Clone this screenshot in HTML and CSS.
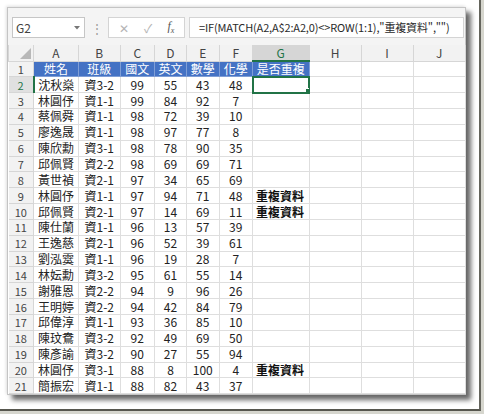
FILE: index.html
```html
<!DOCTYPE html>
<html lang="zh-Hant">
<head>
  <meta charset="UTF-8">
  <title>重複資料 - Excel</title>
  <link rel="stylesheet" href="styles.css">
</head>
<body>
  <div class="page">
    <div class="sheet">

      <!-- Name box + formula bar -->
      <div class="toolbar">
        <div class="name-box">
          <span>G2</span>
          <svg class="dd" width="6" height="4" viewBox="0 0 6 4"><polygon points="0,0 6,0 3,3.5" fill="#777"/></svg>
        </div>
        <div class="grip">⋮</div>
        <div class="fx-box">
          <span class="fx-btn">✕</span>
          <span class="fx-btn">✓</span>
          <span class="fx-btn fx">f<sub>x</sub></span>
        </div>
        <div class="formula">=IF(MATCH(A2,A$2:A2,0)&lt;&gt;ROW(1:1),"重複資料","")</div>
      </div>

      <!-- Grid -->
      <table class="grid">
        <colgroup>
          <col class="w-rh"><col class="w-a"><col class="w-b"><col class="w-c"><col class="w-d">
          <col class="w-e"><col class="w-f"><col class="w-g"><col class="w-h"><col class="w-i"><col class="w-j">
        </colgroup>
        <tr class="col-heads">
          <th class="corner"><svg width="11" height="11" viewBox="0 0 11 11"><polygon points="11,0 11,11 0,11" fill="#b8b8b8"/></svg></th>
          <th>A</th><th>B</th><th>C</th><th>D</th><th>E</th><th>F</th><th class="sel">G</th><th>H</th><th>I</th><th>J</th>
        </tr>
        <tr>
          <th class="rh">1</th>
          <td class="hd">姓名</td><td class="hd">班級</td><td class="hd">國文</td><td class="hd">英文</td><td class="hd">數學</td><td class="hd">化學</td><td class="hd">是否重複</td><td></td><td></td><td></td>
        </tr>
        <tr>
          <th class="rh sel">2</th>
          <td>沈秋燊</td><td>資3-2</td><td>99</td><td>55</td><td>43</td><td>48</td><td class="active"><span class="handle"></span></td><td></td><td></td><td></td>
        </tr>
        <tr><th class="rh">3</th><td>林圓伃</td><td>資1-1</td><td>99</td><td>84</td><td>92</td><td>7</td><td class="dup"></td><td></td><td></td><td></td></tr>
        <tr><th class="rh">4</th><td>蔡佩舜</td><td>資1-1</td><td>98</td><td>72</td><td>39</td><td>10</td><td class="dup"></td><td></td><td></td><td></td></tr>
        <tr><th class="rh">5</th><td>廖逸晟</td><td>資1-1</td><td>98</td><td>97</td><td>77</td><td>8</td><td class="dup"></td><td></td><td></td><td></td></tr>
        <tr><th class="rh">6</th><td>陳欣勳</td><td>資3-1</td><td>98</td><td>78</td><td>90</td><td>35</td><td class="dup"></td><td></td><td></td><td></td></tr>
        <tr><th class="rh">7</th><td>邱佩賢</td><td>資2-2</td><td>98</td><td>69</td><td>69</td><td>71</td><td class="dup"></td><td></td><td></td><td></td></tr>
        <tr><th class="rh">8</th><td>黃世禎</td><td>資2-1</td><td>97</td><td>34</td><td>65</td><td>69</td><td class="dup"></td><td></td><td></td><td></td></tr>
        <tr><th class="rh">9</th><td>林圓伃</td><td>資1-1</td><td>97</td><td>94</td><td>71</td><td>48</td><td class="dup">重複資料</td><td></td><td></td><td></td></tr>
        <tr><th class="rh">10</th><td>邱佩賢</td><td>資2-1</td><td>97</td><td>14</td><td>69</td><td>11</td><td class="dup">重複資料</td><td></td><td></td><td></td></tr>
        <tr><th class="rh">11</th><td>陳仕蘭</td><td>資1-1</td><td>96</td><td>13</td><td>57</td><td>39</td><td class="dup"></td><td></td><td></td><td></td></tr>
        <tr><th class="rh">12</th><td>王逸慈</td><td>資2-1</td><td>96</td><td>52</td><td>39</td><td>61</td><td class="dup"></td><td></td><td></td><td></td></tr>
        <tr><th class="rh">13</th><td>劉泓霙</td><td>資1-1</td><td>96</td><td>19</td><td>28</td><td>7</td><td class="dup"></td><td></td><td></td><td></td></tr>
        <tr><th class="rh">14</th><td>林妘勳</td><td>資3-2</td><td>95</td><td>61</td><td>55</td><td>14</td><td class="dup"></td><td></td><td></td><td></td></tr>
        <tr><th class="rh">15</th><td>謝雅恩</td><td>資2-2</td><td>94</td><td>9</td><td>96</td><td>26</td><td class="dup"></td><td></td><td></td><td></td></tr>
        <tr><th class="rh">16</th><td>王明婷</td><td>資2-2</td><td>94</td><td>42</td><td>84</td><td>79</td><td class="dup"></td><td></td><td></td><td></td></tr>
        <tr><th class="rh">17</th><td>邱偉淳</td><td>資1-1</td><td>93</td><td>36</td><td>85</td><td>10</td><td class="dup"></td><td></td><td></td><td></td></tr>
        <tr><th class="rh">18</th><td>陳玟鴦</td><td>資3-2</td><td>92</td><td>49</td><td>69</td><td>50</td><td class="dup"></td><td></td><td></td><td></td></tr>
        <tr><th class="rh">19</th><td>陳彥諭</td><td>資3-2</td><td>90</td><td>27</td><td>55</td><td>94</td><td class="dup"></td><td></td><td></td><td></td></tr>
        <tr><th class="rh">20</th><td>林圓伃</td><td>資3-1</td><td>88</td><td>8</td><td>100</td><td>4</td><td class="dup">重複資料</td><td></td><td></td><td></td></tr>
        <tr><th class="rh">21</th><td>簡振宏</td><td>資1-1</td><td>88</td><td>82</td><td>43</td><td>37</td><td class="dup"></td><td></td><td></td><td></td></tr>
      </table>

    </div>
  </div>
</body>
</html>
```

FILE: styles.css
```css
/* Page frame */
body {
  margin: 0;
  background: #d6d6ce;
  font-family: "Noto Sans CJK TC", sans-serif;
  color: #222;
}

.page {
  box-sizing: border-box;
  width: 481px;
  height: 411px;
  padding: 7px 0 0 7px;
  background: #fff;
  border-right: 2px solid #64645c;
  border-bottom: 2px solid #56564e;
}

.sheet {
  width: 457px;
  background: #f4f4f4;
  border: 1px solid #c4c4c4;
  box-shadow: 5px 5px 5px rgba(0, 0, 0, 0.6), -1px -1px 3px rgba(0, 0, 0, 0.12);
}

/* Formula bar */
.toolbar {
  display: flex;
  align-items: flex-start;
  height: 37px;
  padding: 9px 1px 0 4px;
  box-sizing: border-box;
}

.name-box {
  display: flex;
  align-items: center;
  justify-content: space-between;
  box-sizing: border-box;
  width: 73px;
  height: 21px;
  padding: 0 4px 0 3px;
  background: #fff;
  border: 1px solid #c6c6c6;
  font-size: 12px;
  color: #444;
}

.grip {
  width: 23px;
  text-align: center;
  line-height: 21px;
  font-size: 12px;
  color: #9a9a9a;
}

.fx-box {
  display: flex;
  align-items: center;
  justify-content: space-around;
  box-sizing: border-box;
  width: 77px;
  height: 21px;
  padding: 0 2px;
  background: #fff;
  border: 1px solid #d4d4d4;
}

.fx-btn {
  font-size: 12px;
  color: #b4b4b4;
}

.fx {
  font-family: "Liberation Serif", serif;
  font-style: italic;
  font-size: 12px;
  color: #555;
}

.fx sub {
  font-size: 8px;
}

.formula {
  box-sizing: border-box;
  flex: 1;
  height: 21px;
  margin-left: 4px;
  padding-left: 9px;
  background: #fff;
  border: 1px solid #d4d4d4;
  font-size: 11px;
  letter-spacing: -0.15px;
  line-height: 19px;
  color: #2a2a2a;
  white-space: nowrap;
  overflow: hidden;
}

/* Grid */
.grid {
  width: 457px;
  table-layout: fixed;
  border-collapse: collapse;
  background: #fff;
  font-size: 12px;
}

.w-rh { width: 25px; }
.w-a { width: 45px; }
.w-b { width: 41.5px; }
.w-c { width: 34.5px; }
.w-d { width: 32px; }
.w-e { width: 32.5px; }
.w-f { width: 33.5px; }
.w-g { width: 56.5px; }
.w-h { width: 52px; }
.w-i { width: 52px; }
.w-j { width: 52.5px; }

.grid tr {
  height: 15.85px;
}

.grid td {
  padding: 0;
  border: 1px solid #dedede;
  text-align: center;
  line-height: 14px;
  white-space: nowrap;
  overflow: hidden;
}

.grid th {
  padding: 0;
  font-weight: normal;
  color: #444;
  background: #f2f2f2;
  border: 1px solid #d6d6d6;
  line-height: 14px;
}

.col-heads {
  height: 16px !important;
}

.col-heads th {
  font-size: 12px;
  border-top: none;
}

.corner {
  text-align: right;
  vertical-align: bottom;
}

.corner svg {
  display: block;
  margin: 0 2px 2px auto;
}

.col-heads th.sel {
  background: #d6d6d6;
  color: #217346;
  border-bottom: 2px solid #217346;
}

.rh {
  font-size: 11px;
  border-left: none !important;
}

.rh.sel {
  background: #e0e0e0;
  color: #217346;
  border-right: 2px solid #217346;
}

.grid td.hd {
  background: #4472c4;
  color: #fff;
  border-color: #7f9ed6;
}

.grid td.dup {
  text-align: left;
  padding-left: 3px;
  font-weight: bold;
  color: #111;
}

.grid td.active {
  position: relative;
  outline: 2px solid #217346;
  outline-offset: -1px;
}

.handle {
  position: absolute;
  right: -3px;
  bottom: -3px;
  width: 5px;
  height: 5px;
  background: #217346;
  border: 1px solid #fff;
}
```
